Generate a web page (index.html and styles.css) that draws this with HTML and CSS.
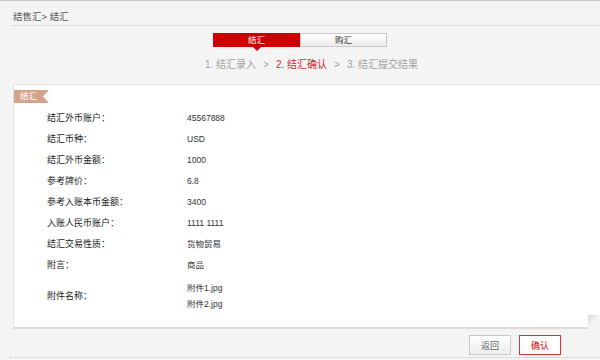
FILE: index.html
```html
<!DOCTYPE html>
<html lang="zh-CN">
<head>
  <meta charset="UTF-8">
  <meta name="viewport" content="width=device-width, initial-scale=1.0">
  <title>结汇确认</title>
  <link rel="stylesheet" href="styles.css">
</head>
<body>
  <div class="crumb">结售汇&gt; 结汇</div>

  <div class="tabs">
    <div class="tab tab-active">结汇</div>
    <div class="tab">购汇</div>
  </div>

  <div class="steps">
    <span>1. 结汇录入</span>
    <span class="sep">&gt;</span>
    <span class="on">2. 结汇确认</span>
    <span class="sep">&gt;</span>
    <span>3. 结汇提交结果</span>
  </div>

  <div class="panel">
    <div class="badge">结汇</div>
    <table class="info">
      <tr><td class="label">结汇外币账户：</td><td>45567888</td></tr>
      <tr><td class="label">结汇币种：</td><td>USD</td></tr>
      <tr><td class="label">结汇外币金额：</td><td>1000</td></tr>
      <tr><td class="label">参考牌价：</td><td>6.8</td></tr>
      <tr><td class="label">参考入账本币金额：</td><td>3400</td></tr>
      <tr><td class="label">入账人民币账户：</td><td>1111 1111</td></tr>
      <tr><td class="label">结汇交易性质：</td><td>货物贸易</td></tr>
      <tr><td class="label">附言：</td><td>商品</td></tr>
      <tr class="files">
        <td class="label">附件名称：</td>
        <td>附件1.jpg<br>附件2.jpg</td>
      </tr>
    </table>
  </div>

  <div class="actions">
    <button class="btn">返回</button>
    <button class="btn btn-ok">确认</button>
  </div>
</body>
</html>
```

FILE: styles.css
```css
body {
  margin: 0;
  font-family: "Liberation Sans", "Noto Sans CJK SC", sans-serif;
  font-size: 9px;
  color: #333;
  background-color: #f4f4f4;
  border-top: 1px solid #c8c8c8;
  overflow: hidden;
}

.crumb {
  margin-left: 13px;
  height: 16px;
  padding-top: 8px;
  line-height: 16px;
  font-size: 9.5px;
  color: #555;
  border-bottom: 1px dotted #c4c4c4;
}

.tabs {
  display: flex;
  justify-content: center;
  margin-top: 7px;
}

.tab {
  position: relative;
  width: 85px;
  height: 12px;
  line-height: 12px;
  font-size: 8.5px;
  text-align: center;
  color: #333;
  border: 1px solid #c8c8c8;
  background: linear-gradient(#ffffff, #ececec);
}

.tab-active {
  color: #fff;
  border-color: #cc0000;
  background: #cc0000;
}

/* little arrow under the active tab */
.tab-active::after {
  content: "";
  position: absolute;
  left: 39px;
  top: 13px;
  border-left: 4px solid transparent;
  border-right: 4px solid transparent;
  border-top: 4px solid #cc0000;
}

.steps {
  display: flex;
  justify-content: center;
  margin-top: 10px;
  padding-left: 23px;
  line-height: 16px;
  font-size: 10px;
  color: #a0a0a0;
}

.steps .sep {
  margin: 0 7px;
}

.steps .on {
  color: #d0272c;
}

.panel {
  position: relative;
  margin-top: 11px;
  margin-left: 13px;
  padding-top: 5px;
  padding-bottom: 10px;
  background-color: #fff;
  border-top: 1px solid #e6e6e6;
  border-left: 1px solid #e2e2e2;
  border-bottom: 2px solid #dcdcdc;
}

/* folded page corner */
.panel::after {
  content: "";
  position: absolute;
  right: 0;
  bottom: -2px;
  width: 12px;
  height: 14px;
  background: linear-gradient(to bottom right, #d6d6d6, #f6f6f6 50%, #f4f4f4 50%);
}

.badge {
  width: 35px;
  height: 13px;
  line-height: 13px;
  padding-left: 6px;
  box-sizing: border-box;
  font-size: 8.5px;
  color: #fff;
  background-color: #d3a48a;
  clip-path: polygon(0 0, 100% 0, calc(100% - 6px) 50%, 100% 100%, 0 100%);
}

.info {
  border-collapse: collapse;
  margin-top: 4px;
  margin-left: 33px;
}

.info td {
  height: 21px;
  padding: 0;
  line-height: 16px;
  font-size: 8.5px;
  color: #333;
}

.info .label {
  width: 140px;
  font-size: 9px;
  color: #222;
}

.info .files td {
  height: auto;
  padding: 5px 0;
}

.actions {
  display: flex;
  justify-content: flex-end;
  gap: 8px;
  margin-top: 6px;
  margin-left: 10px;
  padding-right: 39px;
  padding-bottom: 2px;
  border-bottom: 1px dotted #c4c4c4;
}

.btn {
  width: 42px;
  height: 20px;
  padding: 0;
  font-family: inherit;
  font-size: 9px;
  color: #666;
  border: 1px solid #c8c8c8;
  background: linear-gradient(#ffffff, #ececec);
  cursor: pointer;
}

.btn-ok {
  color: #cc0000;
  border-color: #d0353a;
  background: #fff;
}
```
